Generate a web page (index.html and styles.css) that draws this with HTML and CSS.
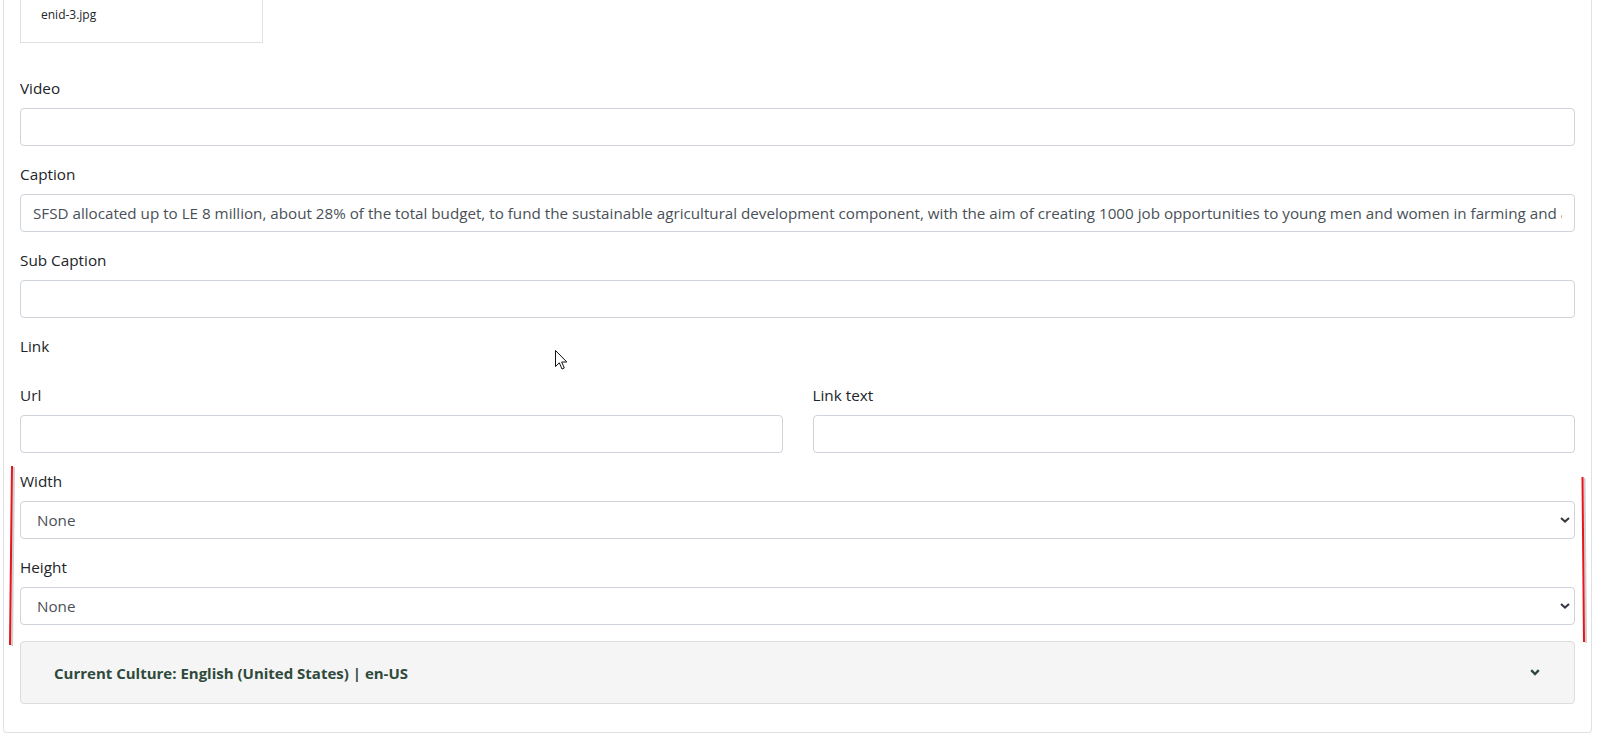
FILE: index.html
```html
<!DOCTYPE html>
<html lang="en">
<head>
<meta charset="utf-8">
<title>Slide settings</title>
<link rel="stylesheet" href="styles.css">
</head>
<body>
<div class="card">
  <div class="file-tile">
    <span class="file-name">enid-3.jpg</span>
  </div>

  <div class="form-group">
    <label class="form-label">Video</label>
    <input class="form-control" type="text" value="">
  </div>

  <div class="form-group">
    <label class="form-label">Caption</label>
    <input class="form-control" type="text" value="SFSD allocated up to LE 8 million, about 28% of the total budget, to fund the sustainable agricultural development component, with the aim of creating 1000 job opportunities to young men and women in farming and agricultural processing.">
  </div>

  <div class="form-group">
    <label class="form-label">Sub Caption</label>
    <input class="form-control" type="text" value="">
  </div>

  <div class="link-title">Link</div>

  <div class="form-row">
    <div class="form-group">
      <label class="form-label">Url</label>
      <input class="form-control" type="text" value="">
    </div>
    <div class="form-group">
      <label class="form-label">Link text</label>
      <input class="form-control" type="text" value="">
    </div>
  </div>

  <div class="form-group">
    <label class="form-label">Width</label>
    <select class="form-select">
      <option>None</option>
    </select>
  </div>

  <div class="form-group">
    <label class="form-label">Height</label>
    <select class="form-select">
      <option>None</option>
    </select>
  </div>

  <div class="culture-panel">
    <span class="culture-title">Current Culture: English (United States) | en-US</span>
    <svg class="culture-chevron" width="10" height="7" viewBox="0 0 10 7" aria-hidden="true">
      <path d="M1.2 1.2 L5 5 L8.8 1.2" fill="none" stroke="#2f4a3b" stroke-width="2.4"/>
    </svg>
  </div>
</div>

<!-- hand-drawn markers beside the size fields -->
<svg class="markers" width="1610" height="735" viewBox="0 0 1610 735" aria-hidden="true">
  <line x1="14" y1="467" x2="12" y2="646" stroke="#cfcfcf" stroke-width="2"/>
  <line x1="12" y1="466" x2="10" y2="645" stroke="#e8141b" stroke-width="2"/>
  <line x1="1584.5" y1="478" x2="1586" y2="643" stroke="#cfcfcf" stroke-width="2"/>
  <line x1="1582.5" y1="477" x2="1584" y2="642" stroke="#e8141b" stroke-width="2"/>
</svg>

<!-- mouse pointer -->
<svg class="pointer" width="13" height="21" viewBox="0 0 13 21" aria-hidden="true">
  <path d="M0.5 0.5 L0.5 16.5 L4.3 12.8 L7 19 L9.3 18 L6.7 12 L11.8 12 Z" fill="#fff" stroke="#111" stroke-width="1"/>
</svg>
</body>
</html>
```

FILE: styles.css
```css
html, body {
  margin: 0;
  padding: 0;
  background: #fff;
}

body {
  position: relative;
  width: 1610px;
  height: 735px;
  overflow: hidden;
  font-family: "Open Sans", "Noto Sans", "Liberation Sans", sans-serif;
  font-size: 15.3px;
  line-height: 24px;
  color: #212529;
}

.card {
  box-sizing: border-box;
  width: 1589px;
  margin-left: 3px;
  padding: 0 16px 0 16px;
  border: 1px solid #dee2e6;
  border-top: none;
  border-radius: 0 0 4px 4px;
  height: 733px;
}

.file-tile {
  box-sizing: border-box;
  width: 243px;
  height: 43px;
  border: 1px solid #dee2e6;
  border-top: none;
  padding: 1px 0 0 20px;
  margin-bottom: 33px;
}

.file-name {
  font-size: 12px;
  line-height: 20px;
  color: #212529;
}

.form-group {
  margin-bottom: 16px;
}

.form-label {
  display: block;
  margin-bottom: 8px;
  height: 24px;
  line-height: 24px;
}

.form-control,
.form-select {
  display: block;
  box-sizing: border-box;
  width: 100%;
  height: 38px;
  margin: 0;
  padding: 6px 12px;
  font-family: inherit;
  font-size: 15.2px;
  line-height: 24px;
  color: #495057;
  background-color: #fff;
  border: 1px solid #ced4da;
  border-radius: 4px;
  outline: none;
}

.form-select {
  appearance: none;
  -webkit-appearance: none;
  padding-left: 16px;
  background-image: url("data:image/svg+xml,%3Csvg xmlns='http://www.w3.org/2000/svg' width='10' height='6' viewBox='0 0 10 6'%3E%3Cpath d='M1 1l4 3.6L9 1' fill='none' stroke='%23343a40' stroke-width='2'/%3E%3C/svg%3E");
  background-repeat: no-repeat;
  background-position: right 4px center;
  background-size: 10px 6px;
}

.link-title {
  height: 24px;
  margin-bottom: 25px;
}

.form-row {
  display: grid;
  grid-template-columns: 1fr 1fr;
  column-gap: 30px;
}

.culture-panel {
  box-sizing: border-box;
  display: flex;
  align-items: center;
  justify-content: space-between;
  height: 63px;
  padding: 0 34px 0 33px;
  background: #f5f5f5;
  border: 1px solid #dddddd;
  border-radius: 4px;
}

.culture-title {
  font-size: 15px;
  font-weight: 700;
  color: #2f4a3b;
}

.culture-chevron {
  display: block;
}

.markers {
  position: absolute;
  left: 0;
  top: 0;
  pointer-events: none;
}

.pointer {
  position: absolute;
  left: 555px;
  top: 350px;
  pointer-events: none;
}
```
